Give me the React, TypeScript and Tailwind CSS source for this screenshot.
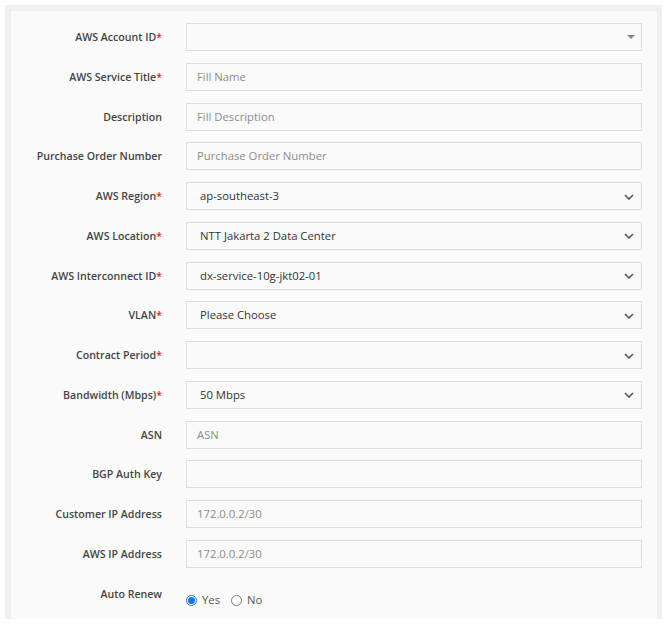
type Field = {
    label: string;
    required?: boolean;
    kind: "input" | "select" | "select2" | "radio";
    value?: string;
    placeholder?: string;
};

const FIELDS: Field[] = [
    { label: "AWS Account ID", required: true, kind: "select2" },
    { label: "AWS Service Title", required: true, kind: "input", placeholder: "Fill Name" },
    { label: "Description", kind: "input", placeholder: "Fill Description" },
    { label: "Purchase Order Number", kind: "input", placeholder: "Purchase Order Number" },
    { label: "AWS Region", required: true, kind: "select", value: "ap-southeast-3" },
    { label: "AWS Location", required: true, kind: "select", value: "NTT Jakarta 2 Data Center" },
    { label: "AWS Interconnect ID", required: true, kind: "select", value: "dx-service-10g-jkt02-01" },
    { label: "VLAN", required: true, kind: "select", value: "Please Choose" },
    { label: "Contract Period", required: true, kind: "select", value: "" },
    { label: "Bandwidth (Mbps)", required: true, kind: "select", value: "50 Mbps" },
    { label: "ASN", kind: "input", placeholder: "ASN" },
    { label: "BGP Auth Key", kind: "input", placeholder: "" },
    { label: "Customer IP Address", kind: "input", placeholder: "172.0.0.2/30" },
    { label: "AWS IP Address", kind: "input", placeholder: "172.0.0.2/30" },
    { label: "Auto Renew", kind: "radio" },
];

function Chevron() {
    return (
        <svg width="10" height="6" viewBox="0 0 10 6" className="shrink-0">
            <path d="M1 1l4 4 4-4" fill="none" stroke="#555" strokeWidth="1.6" />
        </svg>
    );
}

function Control({ field }: { field: Field }) {
    if (field.kind === "radio") {
        return (
            <div className="flex items-center pt-[12px] text-[11.3px] text-[#555]">
                <span className="w-[11px] h-[11px] rounded-full border border-[#1a73e8] flex items-center justify-center bg-white">
                    <span className="w-[7px] h-[7px] rounded-full bg-[#1a73e8]" />
                </span>
                <span className="ml-[5px]">Yes</span>
                <span className="ml-[11px] w-[11px] h-[11px] rounded-full border border-[#777] bg-white" />
                <span className="ml-[5px]">No</span>
            </div>
        );
    }
    if (field.kind === "select2") {
        return (
            <div className="flex-1 h-[28px] border border-[#dedede] bg-[#fafafa] flex items-center justify-end pr-[6px]">
                <span className="w-0 h-0 border-l-[4px] border-r-[4px] border-t-[4px] border-l-transparent border-r-transparent border-t-[#888]" />
            </div>
        );
    }
    if (field.kind === "select") {
        return (
            <div className="flex-1 h-[28px] border border-[#dedede] bg-[#fafafa] flex items-center justify-between pl-[13px] pr-[7px] pt-[1px] text-[11.3px] text-[#333]">
                <span>{field.value}</span>
                <Chevron />
            </div>
        );
    }
    return (
        <div className="flex-1 h-[28px] border border-[#dedede] bg-[#fafafa] flex items-center pl-[10px] pt-[1px] text-[11.3px] text-[#8c8c8c]">
            {field.placeholder}
        </div>
    );
}

export default function App() {
    return (
        <div className="w-[670px] h-[625px] bg-white font-['Open_Sans',sans-serif]">
            <div className="ml-[5px] mt-[5px] w-[657px] h-[614px] bg-[#f0f0f0] pl-[5px] pt-[5px] pr-[5px]">
                <div className="h-full bg-[#fafafa] border-l border-t border-[#ebebeb] pt-[12px] pl-0 pr-[15px] flex flex-col gap-y-[11.77px]">
                    {FIELDS.map((f) => (
                        <div key={f.label} className="flex items-start">
                            <div className="w-[151px] shrink-0 text-right pt-[7px] text-[10.6px] leading-[15px] font-semibold text-[#444]">
                                {f.label}
                                {f.required && <span className="text-[#e02424]">*</span>}
                            </div>
                            <div className="ml-[24px] flex-1 flex">
                                <Control field={f} />
                            </div>
                        </div>
                    ))}
                </div>
            </div>
        </div>
    );
}
